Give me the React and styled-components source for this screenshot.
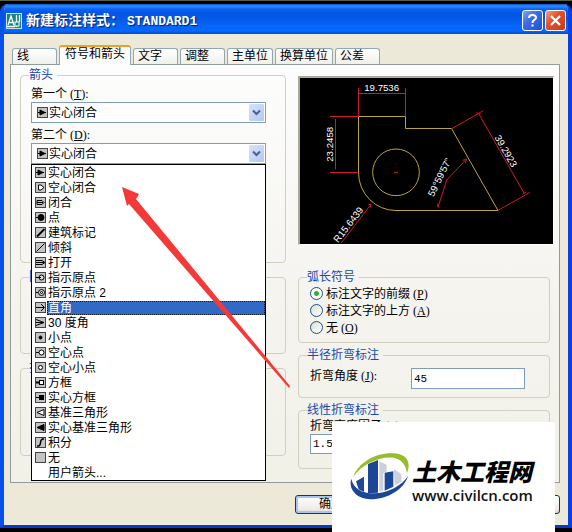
import React from "react";
import styled, { createGlobalStyle, css } from "styled-components";

const sans = '"Liberation Sans", "Noto Sans CJK SC", sans-serif';

const GlobalStyle = createGlobalStyle`
  *, *::before, *::after { box-sizing: border-box; }
  body { margin: 0; background: #000; }
  body, button, input, select { font: 12px/16px ${sans}; color: #000; }
`;

const Desktop = styled.div`
  position: relative;
  display: flex;
  flex-direction: column;
  min-height: 100vh;
  padding: 3px 0 4px;
  border-top: 1px solid #5c5e48;
  overflow: hidden;
`;

const Dialog = styled.main`
  flex: 1;
  display: flex;
  flex-direction: column;
  border: 4px solid #0a3fe0;
  border-top: 0;
  border-left-color: #0450e8;
  border-bottom: 3px solid #0838cc;
  border-radius: 8px 8px 0 0;
  background: #ece9d8;
  overflow: hidden;
`;

const TitleBar = styled.header`
  display: flex;
  align-items: center;
  height: 30px;
  margin: 0 -4px;
  padding: 3px 6px 0;
  background: linear-gradient(#0a4fc4 0, #2f8cff 2px, #0a62f4 5px, #0456e2 9px, #0459e8 15px, #0666fd 22px, #0668ff 27px, #0448cc 30px);
`;

const Title = styled.h1`
  flex: 1;
  margin: 0 0 0 4px;
  font: bold 14px/20px "Noto Sans CJK SC", sans-serif;
  color: #fff;
  text-shadow: 1px 1px 1px #0a1c66;
  white-space: pre;
`;

const TitleName = styled.span`
  margin-left: 3px;
  font-family: "Liberation Mono", monospace;
  font-size: 13px;
`;

const CaptionButton = styled.button`
  display: grid;
  place-items: center;
  width: 21px;
  height: 21px;
  margin-left: 2px;
  padding: 0;
  border: 1px solid #fff;
  border-radius: 3px;
  background: ${(p) =>
    p.$close
      ? "linear-gradient(135deg, #f0a088, #e2512c 40%, #c83a14)"
      : "linear-gradient(135deg, #7fa4f4, #3a6ee6 40%, #1f50cc)"};
`;

const Body = styled.div`
  flex: 1;
  padding: 11px 8px 11px 6px;
`;

const TabList = styled.div`
  display: flex;
  align-items: flex-end;
  gap: 2px;
  height: 19px;
  padding-left: 2px;
`;

const Tab = styled.button`
  min-width: 45px;
  height: 16px;
  padding: 0 4px;
  border: 1px solid #91a7b4;
  border-bottom: 0;
  border-radius: 3px 3px 0 0;
  background: linear-gradient(#fff, #f0f0ea);
  line-height: 15px;
  text-align: left;
  white-space: nowrap;
  ${(p) =>
    p.$active &&
    css`
      height: 20px;
      margin-bottom: -1px;
      padding: 0 5px 3px;
      border-top: 2px solid #f0a020;
      background: #fcfcfc;
    `}
`;

const Panel = styled.section`
  display: grid;
  grid-template-columns: minmax(0, 266fr) minmax(0, 256fr);
  gap: 12px;
  min-height: 419px;
  padding: 3px 5px 12px 9px;
  border: 1px solid #919b9c;
  background: linear-gradient(#fdfdfd, #f4f3ee 60%, #f2f1e8);
`;

const Column = styled.div`
  display: flex;
  flex-direction: column;
  gap: ${(p) => p.$gap}px;
`;

const Group = styled.fieldset`
  min-width: 0;
  min-height: ${(p) => p.$min}px;
  margin: 0 ${(p) => p.$inset || 0}px 0 0;
  padding: ${(p) => p.$top || 0}px ${(p) => p.$side || 10}px 0;
  border: 1px solid #d0d0bf;
  border-radius: 4px;
`;

const Legend = styled.legend`
  margin-left: ${(p) => p.$shift || 0}px;
  padding: 0 4px 0 0;
  line-height: 14px;
  color: #1848b0;
`;

const Access = styled.span`
  margin-left: 3px;
  font-family: "Liberation Serif", serif;
  line-height: 1;
`;

const Field = styled.div`
  position: relative;
  margin: 0 9px 4px 0;
`;

const Label = styled.label`
  display: block;
  line-height: 16px;
  white-space: nowrap;
`;

const Combo = styled.div`
  display: flex;
  align-items: center;
  height: 21px;
  padding: 1px 1px 1px 5px;
  border: 1px solid #7f9db9;
  background: #fff;
`;

const Select = styled.select`
  flex: 1;
  min-width: 0;
  height: 17px;
  padding: 0 0 0 1px;
  border: 0;
  appearance: none;
  background: none;
  outline: 0;
`;

const DropMark = styled.span`
  display: grid;
  place-items: center;
  width: 15px;
  height: 17px;
  border-radius: 1px;
  background: linear-gradient(135deg, #d6e2fc, #b4c8f6);
`;

const Options = styled.ul`
  position: absolute;
  z-index: 1;
  top: 100%;
  left: 0;
  right: 0;
  margin: 0;
  padding: 0;
  border: 1px solid #000;
  background: #fff;
  list-style: none;
`;

const Option = styled.li`
  display: flex;
  align-items: center;
  height: 15px;
  padding-left: 3px;
`;

const OptionText = styled.span`
  flex: 1;
  height: 14px;
  margin-left: 1px;
  padding-left: 1px;
  line-height: 14px;
  ${(p) =>
    p.$selected &&
    css`
      background: #316ac5;
      color: #fff;
      outline: 1px dotted #101830;
      outline-offset: -1px;
    `}
`;

const Glyph = styled.svg`
  flex: none;
  width: 11px;
  height: 11px;
  fill: none;
  stroke: #000;
`;

const Preview = styled.figure`
  height: 169px;
  margin: 8px 0 20px;
  border: 2px solid;
  border-color: #aca899 #fff #fff #aca899;
  border-bottom-width: 1px;
  border-right-width: 1px;
  background: #000;
`;

const Drawing = styled.svg`
  display: block;
  width: 100%;
  height: 100%;
  fill: none;
  stroke-width: 3;
  text {
    font: 29px "Liberation Sans Narrow", "Liberation Sans", sans-serif;
    fill: #fff;
    text-anchor: middle;
  }
`;

const Choice = styled.label`
  display: flex;
  align-items: center;
  height: 17px;
`;

const Radio = styled.input`
  appearance: none;
  width: 13px;
  height: 13px;
  margin: 0 3px 0 1px;
  border: 1px solid #1c5180;
  border-radius: 50%;
  background: linear-gradient(135deg, #dcdcd7, #fff);
  &:checked {
    background: radial-gradient(circle, #30b030 0 2px, #fff 3px);
  }
`;

const AngleRow = styled.div`
  display: grid;
  grid-template-columns: 101px 1fr;
  align-items: start;
  padding-right: 13px;
`;

const TextInput = styled.input`
  width: 100%;
  height: ${(p) => p.$height}px;
  padding: 0 2px;
  border: 1px solid #7f9db9;
  border-radius: 0;
  background: #fff;
  font: 11px "Liberation Mono", monospace;
  outline: 0;
`;

const Footer = styled.footer`
  display: flex;
  justify-content: space-between;
  padding: 12px 0 0 285px;
`;

const PushButton = styled.button`
  width: 72px;
  height: 19px;
  padding: 0;
  border: 1px solid #003c74;
  border-radius: 3px;
  background: linear-gradient(#fff, #ecebe6 80%, #d6d0c5);
  box-shadow: ${(p) => (p.$primary ? "inset 0 0 0 2px #a9c4f0" : "inset 0 -1px 0 #d6d0c5")};
  line-height: 17px;
`;

const Pointer = styled.svg`
  position: absolute;
  z-index: 2;
  top: 180px;
  left: 116px;
  width: 180px;
  height: 210px;
  fill: #f43a38;
  pointer-events: none;
`;

const Watermark = styled.aside`
  position: absolute;
  z-index: 3;
  right: 17px;
  bottom: 0;
  display: flex;
  align-items: flex-start;
  height: 110px;
  padding: 30px 15px 0 18px;
  background: #fff;
`;

const Emblem = styled.svg`
  width: 62px;
  height: 52px;
`;

const Brand = styled.div`
  width: 128px;
  padding-top: 6px;
  white-space: nowrap;
`;

const BrandName = styled.div`
  font: italic 900 24px/26px "Noto Sans CJK SC", sans-serif;
`;

const Site = styled.a`
  display: block;
  color: #111;
  font: 600 15px/22px "Open Sans", sans-serif;
  text-decoration: none;
`;

const glyphs = {
  solid: <path d="M1 5.5H9M3 3L8 5.5L3 8Z" fill="#000" />,
  blank: <path d="M3.5 3L6 3L9 5.5L6 8H3.5Z" fill="#fff" />,
  closed: <path d="M2 3.5H7L9 5.5L7 7.5H2V3.5M2 5.5H8" />,
  dot: <><circle cx="6" cy="5.5" r="3" fill="#000" /><path d="M1 5.5H4" /></>,
  tick: <path d="M2 9.5L9.5 2" strokeWidth="2" />,
  oblique: <path d="M1.5 9.5L9.5 1.5" />,
  open: <path d="M1 3.5H7L10 5.5L7 7.5H1M1 5.5H9" />,
  origin: <><circle cx="6.5" cy="5.5" r="2.5" fill="#ddd" /><path d="M1 5.5H6" /></>,
  origin2: <><circle cx="6.5" cy="5.5" r="3" fill="#ddd" /><circle cx="6.5" cy="5.5" r="1" /><path d="M1 5.5H3" /></>,
  right: <path d="M1 5.5H9M6 2L9.5 5.5L6 9" />,
  thirty: <path d="M1 2.5L9 5.5L1 8.5M1 5.5H8" />,
  small: <circle cx="5.5" cy="5.5" r="1.5" fill="#000" />,
  hollow: <><circle cx="6.5" cy="5.5" r="2.5" fill="#fff" /><path d="M1 5.5H4" /></>,
  smallHollow: <circle cx="5.5" cy="5.5" r="2" fill="#fff" />,
  box: <><rect x="4.5" y="3.5" width="4" height="4" fill="#fff" /><path d="M1 5.5H4" strokeWidth="2" /></>,
  solidBox: <><rect x="4.5" y="3.5" width="4" height="4" fill="#000" /><path d="M1 5.5H4" /></>,
  datum: <path d="M2 5.5L9 2.5V8.5Z" fill="#fff" />,
  solidDatum: <path d="M2 5.5L9 2.5V8.5Z" fill="#000" />,
  integral: <path d="M2 9H4Q5.5 8 5.5 5.5Q5.5 3 7.5 2H9" strokeWidth="1.5" />,
  none: null,
};

const options = [
  ["solid", "实心闭合"],
  ["blank", "空心闭合"],
  ["closed", "闭合"],
  ["dot", "点"],
  ["tick", "建筑标记"],
  ["oblique", "倾斜"],
  ["open", "打开"],
  ["origin", "指示原点"],
  ["origin2", "指示原点 2"],
  ["right", "直角"],
  ["thirty", "30 度角"],
  ["small", "小点"],
  ["hollow", "空心点"],
  ["smallHollow", "空心小点"],
  ["box", "方框"],
  ["solidBox", "实心方框"],
  ["datum", "基准三角形"],
  ["solidDatum", "实心基准三角形"],
  ["integral", "积分"],
  ["none", "无"],
  [null, "用户箭头..."],
];

const ArrowGlyph = ({ name }) => (
  <Glyph viewBox="0 0 11 11" aria-hidden="true">
    {name && <rect x="0.5" y="0.5" width="10" height="10" fill="#c4c4c4" stroke="#444" />}
    {glyphs[name]}
  </Glyph>
);

const Key = ({ k, end = "" }) => (
  <Access>(<u>{k}</u>){end}</Access>
);

const ArrowSelect = ({ id }) => (
  <Combo>
    <ArrowGlyph name="solid" />
    <Select id={id} defaultValue="solid">
      {options.map(([value, text]) => (
        <option key={text} value={value || "user"}>{text}</option>
      ))}
    </Select>
    <DropMark>
      <svg width="9" height="7" viewBox="0 0 9 7" fill="none" stroke="#4d6185" strokeWidth="2">
        <path d="M1 1.5L4.5 5L8 1.5" />
      </svg>
    </DropMark>
  </Combo>
);

const tabs = ["线", "符号和箭头", "文字", "调整", "主单位", "换算单位", "公差"];

export default function App() {
  return (
    <Desktop>
      <GlobalStyle />
      <Dialog>
        <TitleBar>
          <svg width="16" height="16" viewBox="0 0 16 16" fill="none" stroke="#fff">
            <rect x="0.5" y="0.5" width="15" height="15" fill="#16877c" stroke="#c8e6e0" />
            <path d="M2 12L5 3L8 12M3 9.5H7M10.5 2V14M1 13.5H9M13.5 2V9" strokeWidth="1.3" />
            <rect x="9" y="9" width="4" height="4" fill="#16877c" />
          </svg>
          <Title>新建标注样式：<TitleName>STANDARD1</TitleName></Title>
          <CaptionButton aria-label="帮助">
            <svg width="13" height="15" viewBox="0 0 13 15" fill="none" stroke="#fff" strokeWidth="2">
              <path d="M3 5Q3 2 6.5 2Q10 2 10 4.5Q10 6 8 7.2Q6.5 8.2 6.5 10M6.5 11.5V13.5" />
            </svg>
          </CaptionButton>
          <CaptionButton $close aria-label="关闭">
            <svg width="13" height="13" viewBox="0 0 13 13" stroke="#fff" strokeWidth="2.2">
              <path d="M2 2L11 11M11 2L2 11" />
            </svg>
          </CaptionButton>
        </TitleBar>
        <Body>
          <TabList role="tablist">
            {tabs.map((name, i) => (
              <Tab key={name} role="tab" aria-selected={i === 1} $active={i === 1}>{name}</Tab>
            ))}
          </TabList>
          <Panel role="tabpanel">
            <Column $gap={7}>
              <Group $min={195} $top={4}>
                <Legend $shift={-2}>箭头</Legend>
                <Field>
                  <Label htmlFor="first">第一个<Key k="T" end=":" /></Label>
                  <ArrowSelect id="first" />
                </Field>
                <Field>
                  <Label htmlFor="second">第二个<Key k="D" end=":" /></Label>
                  <ArrowSelect id="second" />
                  <Options role="listbox" aria-label="第二个">
                    {options.map(([icon, text]) => (
                      <Option key={text} role="option" aria-selected={icon === "right"}>
                        <ArrowGlyph name={icon} />
                        <OptionText $selected={icon === "right"}>{text}</OptionText>
                      </Option>
                    ))}
                  </Options>
                </Field>
              </Group>
              <Group $min={84}>
                <Legend $shift={-2}>圆心标记</Legend>
              </Group>
              <Group $min={95}>
                <Legend $shift={-2}>折断标注</Legend>
              </Group>
            </Column>
            <Column $gap={5}>
              <Preview>
                <Drawing viewBox="42 24 759 498" role="img" aria-label="标注预览">
                  <g stroke="#b8a838">
                    <path d="M217.5 139.5H358.5V175.5H496.5L636 421.5H330A112 114 0 0 1 217.5 307.5Z" />
                    <circle cx="330" cy="307" r="70" />
                  </g>
                  <g stroke="#d01828">
                    <path d="M217.5 139V54M358.5 139V54M217.5 70.5H358.5M217 139.5H132M217 307.5H132M148.5 147V298" />
                    <path d="M497 176L592 122M636 421L732 367M577 129L715 371M571 127L583 133M709 373L721 366" />
                    <path d="M456 412L482 330L542 267M530 271L542 267L538 279M455 400L456 412M165 520L255 403M247 404L255 403L253 412M324 307H336" />
                  </g>
                  <text x="287" y="63">19.7536</text>
                  <text transform="translate(141 223) rotate(-90)">23.2458</text>
                  <text transform="translate(651 248) rotate(60)">39.2923</text>
                  <text transform="translate(470 326) rotate(-64)">59°59'57"</text>
                  <text transform="translate(195 470) rotate(-52)">R15.6439</text>
                </Drawing>
              </Preview>
              <Group $min={73} $inset={4} $top={1}>
                <Legend $shift={-2}>弧长符号</Legend>
                <Choice><Radio type="radio" name="arc" defaultChecked />标注文字的前缀<Key k="P" /></Choice>
                <Choice><Radio type="radio" name="arc" />标注文字的上方<Key k="A" /></Choice>
                <Choice><Radio type="radio" name="arc" />无<Key k="O" /></Choice>
              </Group>
              <Group $min={50} $inset={4} $top={6} $side={11}>
                <Legend $shift={-3}>半径折弯标注</Legend>
                <AngleRow>
                  <Label htmlFor="angle">折弯角度<Key k="J" end=":" /></Label>
                  <TextInput id="angle" defaultValue="45" $height={21} />
                </AngleRow>
              </Group>
              <Group $min={66} $inset={4} $side={11} $top={1}>
                <Legend $shift={-3}>线性折弯标注</Legend>
                <Label htmlFor="factor">折弯高度因子<Key k="F" end=":" /></Label>
                <TextInput id="factor" defaultValue="1.5" $height={20} />
              </Group>
            </Column>
          </Panel>
          <Footer>
            <PushButton $primary>确定</PushButton>
            <PushButton aria-label="帮助" />
          </Footer>
        </Body>
      </Dialog>
      <Pointer viewBox="116 180 180 210" aria-hidden="true">
        <path d="M122 186L139 193L136 198L290 385L289 387L129 203L127 205Z" />
      </Pointer>
      <Watermark>
        <Emblem viewBox="196 60 186 156" aria-hidden="true">
          <path d="M206 134C225 80 300 52 348 68C374 77 376 100 367 124C364 100 352 84 330 78C288 70 232 96 206 134Z" fill="#96be28" />
          <path d="M200 140C190 170 214 200 256 202C308 203 358 172 370 132C352 160 310 184 268 184C232 184 206 170 200 140Z" fill="#1c4696" />
          <path d="M214 148L238 134V180L222 172ZM250 96L280 84V182L250 184ZM300 122L326 118V164L300 176Z" fill="#1c4696" />
          <path d="M284 88L306 98V118L296 124V176L284 180ZM328 112L350 126V150L330 160Z" fill="#ccd0d8" />
        </Emblem>
        <Brand>
          <BrandName>土木工程网</BrandName>
          <Site href="#site">www.civilcn.com</Site>
        </Brand>
      </Watermark>
    </Desktop>
  );
}
